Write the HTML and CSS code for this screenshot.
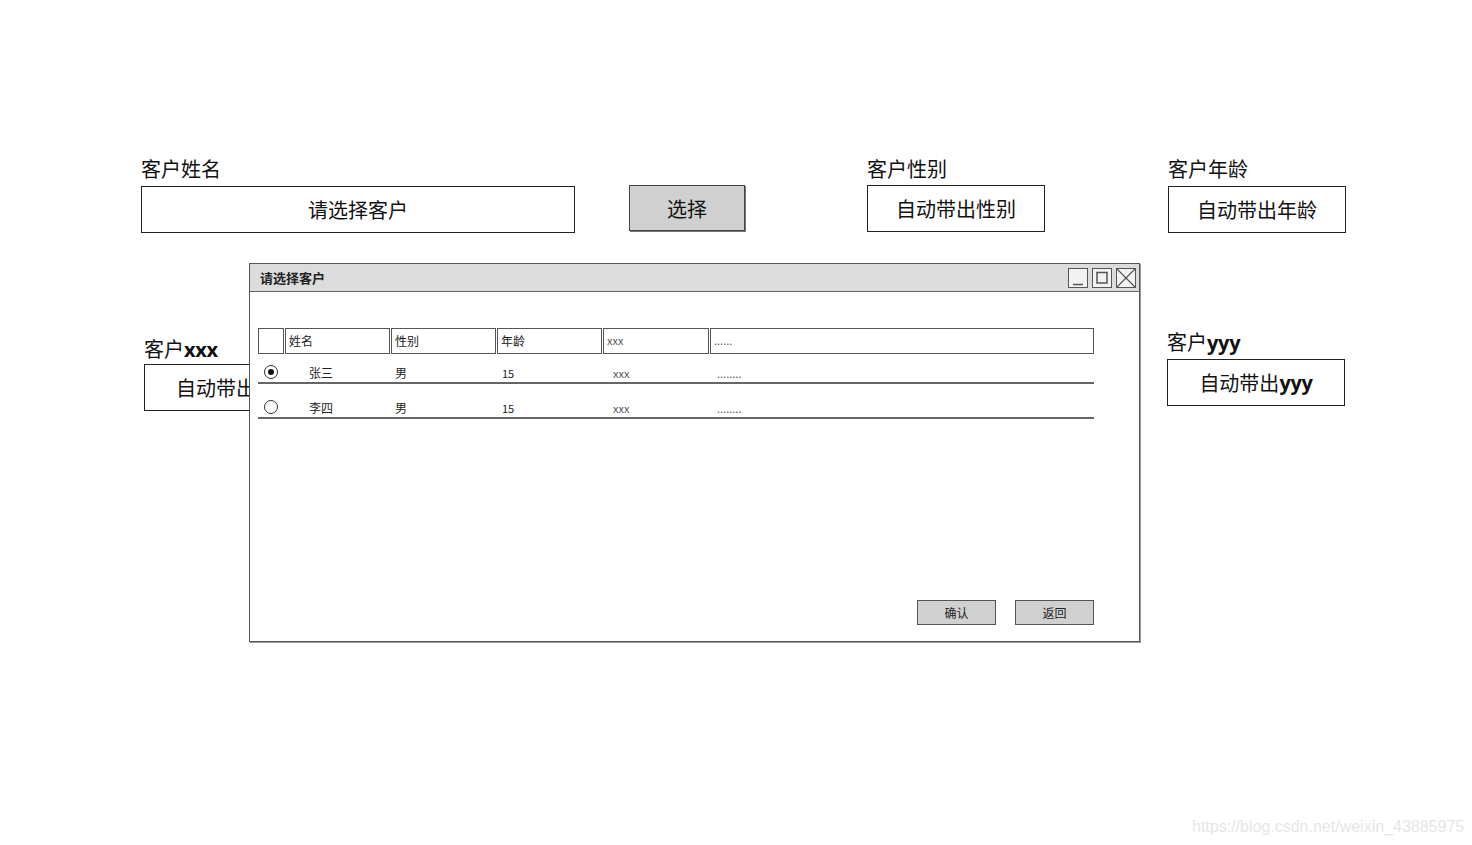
FILE: index.html
```html
<!DOCTYPE html>
<html lang="zh-CN">
<head>
    <meta charset="UTF-8">
    <meta name="viewport" content="width=device-width, initial-scale=1.0">
    <title>客户信息</title>
    <link rel="stylesheet" href="styles.css">
</head>
<body>
    <div class="page">
        <!-- first row: name picker + auto-filled fields -->
        <div class="row row-top">
            <div class="field field-name">
                <div class="label">客户姓名</div>
                <div class="box">请选择客户</div>
            </div>
            <button class="pick" type="button">选择</button>
            <div class="field field-gender">
                <div class="label">客户性别</div>
                <div class="box">自动带出性别</div>
            </div>
            <div class="field field-age">
                <div class="label">客户年龄</div>
                <div class="box">自动带出年龄</div>
            </div>
        </div>

        <div class="row row-extra">
            <div class="field field-x">
                <div class="label">客户<span class="latin">xxx</span></div>
                <div class="box">自动带出<span class="latin">xxx</span></div>
            </div>
            <div class="field field-y">
                <div class="label">客户<span class="latin">yyy</span></div>
                <div class="box">自动带出<span class="latin">yyy</span></div>
            </div>
        </div>
    </div>

    <!-- customer picker window -->
    <div class="dialog">
        <div class="titlebar">
            <span class="title">请选择客户</span>
            <div class="controls">
                <span class="ctl">
                    <svg width="18" height="18" viewBox="0 0 18 18"><path d="M4 15.5h10" stroke="#555" stroke-width="1.5"/></svg>
                </span>
                <span class="ctl">
                    <svg width="18" height="18" viewBox="0 0 18 18"><rect x="4" y="3.5" width="10" height="10.5" fill="none" stroke="#555" stroke-width="1.5"/></svg>
                </span>
                <span class="ctl">
                    <svg width="18" height="18" viewBox="0 0 18 18"><path d="M0 0L18 18M18 0L0 18" stroke="#444" stroke-width="1.2"/></svg>
                </span>
            </div>
        </div>

        <div class="dialog-body">
            <div class="grid thead">
                <div class="th"></div>
                <div class="th">姓名</div>
                <div class="th">性别</div>
                <div class="th">年龄</div>
                <div class="th th-light">xxx</div>
                <div class="th th-light">......</div>
            </div>

            <div class="grid tr">
                <div class="td td-radio"><span class="radio checked"></span></div>
                <div class="td td-name">张三</div>
                <div class="td td-gender">男</div>
                <div class="td td-age">15</div>
                <div class="td td-x">xxx</div>
                <div class="td td-more">........</div>
            </div>
            <div class="grid tr">
                <div class="td td-radio"><span class="radio"></span></div>
                <div class="td td-name">李四</div>
                <div class="td td-gender">男</div>
                <div class="td td-age">15</div>
                <div class="td td-x">xxx</div>
                <div class="td td-more">........</div>
            </div>

            <div class="footer">
                <button class="btn" type="button">确认</button>
                <button class="btn" type="button">返回</button>
            </div>
        </div>
    </div>

    <div class="watermark">https://blog.csdn.net/weixin_43885975</div>
</body>
</html>
```

FILE: styles.css
```css
* {
    box-sizing: border-box;
}
body {
    margin: 0;
    background: #fff;
    color: #111;
    font-family: "Liberation Serif", "Noto Sans CJK SC", serif;
}
.page {
    width: 1346px;
    padding: 158px 0 0 141px;
}
.row {
    display: flex;
    align-items: flex-start;
}
.label {
    font-size: 20px;
    line-height: 24px;
    height: 24px;
    margin-bottom: 4px;
    white-space: nowrap;
}
.box {
    height: 47px;
    border: 1px solid #222;
    display: flex;
    align-items: center;
    justify-content: center;
    font-size: 20px;
    white-space: nowrap;
}
.latin {
    font-family: "Open Sans", sans-serif;
    font-weight: 700;
    font-size: 20px;
    letter-spacing: -0.3px;
}

.field-name .box {
    width: 434px;
}
.pick {
    width: 116px;
    height: 46px;
    margin: 27px 0 0 54px;
    background: #d0d0d0;
    border: 1px solid #444;
    box-shadow: 1px 1px 0 #777;
    font-family: inherit;
    font-size: 20px;
    color: #111;
    padding: 0;
}
.field-gender {
    margin-left: 122px;
}
.field-age {
    margin-left: 123px;
}
.field-gender .box,
.field-age .box,
.field-x .box,
.field-y .box {
    width: 178px;
}
.field-gender .label {
    margin-bottom: 3px;
}

.row-extra {
    margin-top: 103px;
}
.field-x {
    margin-left: 3px;
}
.field-x .label {
    margin-top: 2px;
    margin-bottom: 2px;
}
.field-y {
    margin-left: auto;
    margin-right: 1px;
    margin-top: -5px;
}
.field-x .box {
    justify-content: flex-start;
    padding-left: 31px;
}

/* picker window */
.dialog {
    position: absolute;
    left: 249px;
    top: 263px;
    width: 891px;
    height: 379px;
    background: #fff;
    border: 1px solid #555;
    box-shadow: 1px 1px 0 #999;
    display: flex;
    flex-direction: column;
    font-family: "Noto Sans CJK SC", sans-serif;
}
.titlebar {
    height: 28px;
    background: #dcdcdc;
    border-bottom: 1px solid #666;
    display: flex;
    align-items: center;
    padding: 0 3px 0 10px;
}
.title {
    font-size: 13px;
    font-weight: 700;
    color: #222;
}
.controls {
    margin-left: auto;
    display: flex;
    gap: 4px;
}
.ctl {
    width: 20px;
    height: 20px;
    border: 1px solid #555;
    background: #f2f2f2;
    display: flex;
    overflow: hidden;
}
.ctl svg {
    display: block;
}

.dialog-body {
    flex: 1;
    display: flex;
    flex-direction: column;
    padding: 36px 45px 16px 8px;
}
.grid {
    display: grid;
    grid-template-columns: 26px 105px 105px 105px 106px 1fr;
    column-gap: 1px;
}
.thead {
    height: 26px;
}
.th {
    border: 1px solid #555;
    font-size: 12px;
    line-height: 23px;
    padding-left: 3px;
    color: #222;
}
.th-light {
    color: #555;
    font-size: 11px;
}
.tr {
    height: 30px;
    border-bottom: 2px solid #666;
    align-items: end;
    padding-bottom: 1px;
    font-size: 12px;
    line-height: 16px;
    color: #222;
}
.tr + .tr {
    height: 35px;
}
.td-radio {
    display: flex;
    justify-content: center;
    padding-bottom: 2px;
}
.radio {
    width: 14px;
    height: 14px;
    border: 1px solid #333;
    border-radius: 50%;
    display: flex;
    align-items: center;
    justify-content: center;
}
.radio.checked::after {
    content: "";
    width: 6px;
    height: 6px;
    border-radius: 50%;
    background: #111;
}
.td-name {
    padding-left: 24px;
}
.td-gender {
    padding-left: 4px;
}
.td-age {
    padding-left: 5px;
    font-size: 11px;
}
.td-x {
    padding-left: 10px;
    color: #555;
    font-size: 11px;
}
.td-more {
    padding-left: 7px;
    color: #555;
    font-size: 11px;
}

.footer {
    margin-top: auto;
    display: flex;
    justify-content: flex-end;
    gap: 19px;
}
.btn {
    width: 79px;
    height: 25px;
    padding: 0;
    background: #d0d0d0;
    border: 1px solid #555;
    font-family: inherit;
    font-size: 12px;
    color: #222;
}

.watermark {
    position: absolute;
    left: 1192px;
    top: 818px;
    font-family: "Liberation Sans", sans-serif;
    font-size: 16px;
    color: #e6e6e6;
}
```
